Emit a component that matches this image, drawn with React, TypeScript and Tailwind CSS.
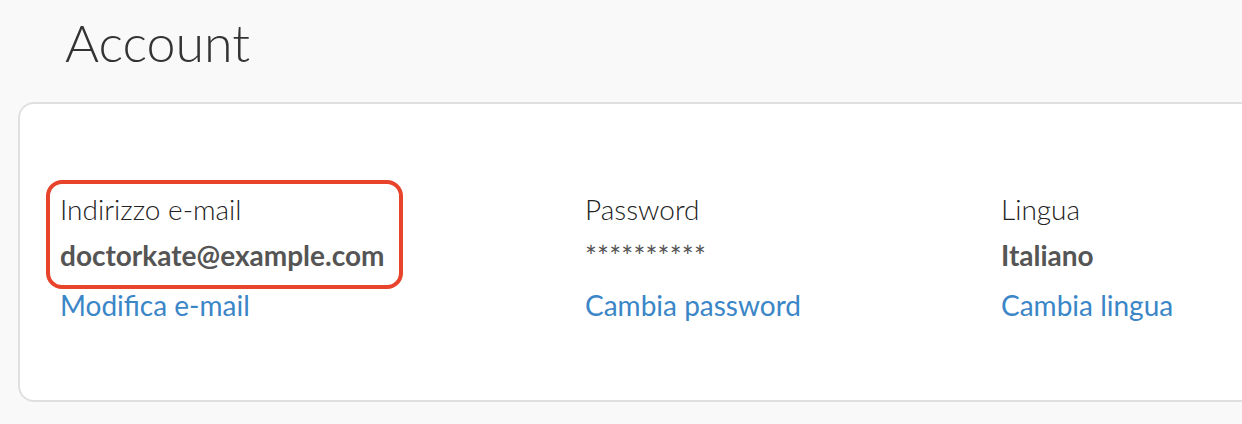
import React from "react";

export default function App() {
  return (
    <div
      className="w-[1242px] h-[424px] bg-[#f9f9f9] overflow-hidden"
      style={{ fontFamily: "Lato, 'Open Sans', sans-serif" }}
    >
      <h1 className="pl-[65px] pt-[12px] h-[102px] text-[52px] leading-[60px] font-light text-[#333]">
        Account
      </h1>
      <div className="ml-[18px] w-[1260px] h-[300px] bg-white border-2 border-[#e0e0e0] rounded-[16px] pl-[40px] pt-[85px]">
        <div className="flex">
          <div className="w-[525px] relative">
            <div className="absolute left-[-14px] top-[-9px] w-[357px] h-[109px] border-[4px] border-[#e8432b] rounded-[16px] pointer-events-none" />
            <div className="text-[28px] leading-[40px] font-light text-[#222]">Indirizzo e-mail</div>
            <div className="text-[28px] leading-[52px] font-bold text-[#555]">doctorkate@example.com</div>
            <div className="text-[28px] leading-[48px] text-[#3b86c7]">Modifica e-mail</div>
          </div>
          <div className="w-[416px]">
            <div className="text-[28px] leading-[40px] font-light text-[#222]">Password</div>
            <div className="text-[28px] leading-[54px] text-[#555] tracking-[0.2px]">**********</div>
            <div className="text-[28px] leading-[44px] text-[#3b86c7]">Cambia password</div>
          </div>
          <div>
            <div className="text-[28px] leading-[40px] font-light text-[#222]">Lingua</div>
            <div className="text-[28px] leading-[52px] font-bold text-[#555]">Italiano</div>
            <div className="text-[28px] leading-[48px] text-[#3b86c7]">Cambia lingua</div>
          </div>
        </div>
      </div>
    </div>
  );
}
